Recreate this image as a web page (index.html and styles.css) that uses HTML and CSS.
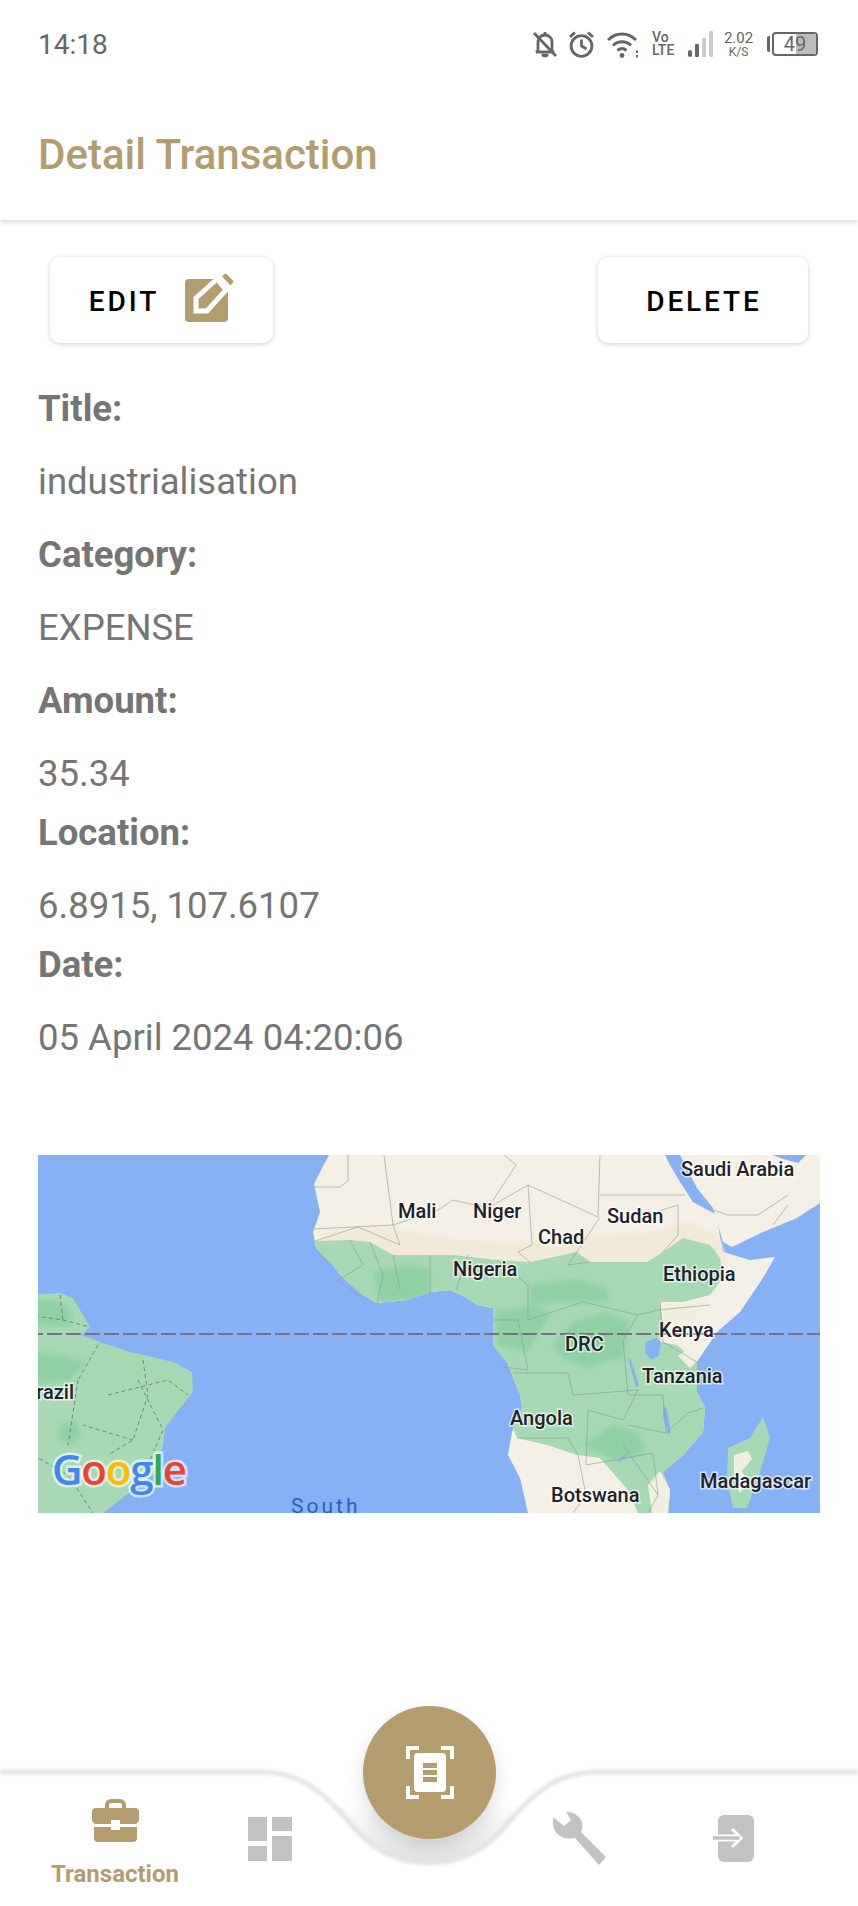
FILE: index.html
```html
<!DOCTYPE html>
<html lang="en">
<head>
  <meta charset="UTF-8" />
  <title>Detail Transaction</title>
  <meta name="viewport" content="width=device-width, initial-scale=1.0" />
  <link rel="stylesheet" href="styles.css">
</head>
<body>
<div class="screen">

  <div class="status-bar">
    <span class="status-time">14:18</span>
    <div class="status-icons">
      <svg class="ic-bell" viewBox="0 0 24 27" fill="none" stroke="#666" stroke-width="2.8">
        <path d="M5 20V11c0-4 3-7 7-7s7 3 7 7v9l2 1H3z"/>
        <path d="M9.5 23a2.6 2.6 0 0 0 5 0" fill="#666"/>
        <path d="M12 1v3"/>
        <path d="M1 2l22 23"/>
      </svg>
      <svg class="ic-clock" viewBox="0 0 27 27" fill="none" stroke="#666" stroke-width="2.8">
        <circle cx="13.5" cy="15" r="10.4"/>
        <path d="M13.5 8.5V15l5 3"/>
        <path d="M2 6l5-4.500M25 6l-5-4.500"/>
      </svg>
      <svg class="ic-wifi" viewBox="0 0 32 27" fill="none" stroke="#666" stroke-width="3">
        <path d="M1 9c8-8 20-8 28 0"/>
        <path d="M6 14.500c5-5 13-5 18 0"/>
        <path d="M10.500 19.500c3-2.600 6-2.600 9 0"/>
        <circle cx="15" cy="24.500" r="2.400" fill="#666" stroke="none"/>
        <path d="M30 19.500v2.500M30 24v2.500" stroke-width="2"/>
      </svg>
      <div class="ic-volte"><span>Vo</span><span>LTE</span></div>
      <svg class="ic-signal" viewBox="0 0 25 26">
        <rect x="0" y="19" width="4" height="7" rx="2" fill="#666"/>
        <rect x="7" y="13" width="4" height="13" rx="1" fill="#666"/>
        <rect x="14" y="7" width="4" height="19" rx="1" fill="#ccc"/>
        <rect x="21" y="0" width="4" height="26" rx="1" fill="#ccc"/>
      </svg>
      <div class="ic-speed"><span class="speed-num">2.02</span><span class="speed-unit">K/S</span></div>
      <div class="battery">
        <span class="battery-cap"></span>
        <div class="battery-body"><span class="battery-level"></span><span class="battery-num">49</span></div>
      </div>
    </div>
  </div>

  <header class="app-bar">
    <h1>Detail Transaction</h1>
  </header>

  <main class="content">
    <div class="actions">
      <button class="btn btn-edit"><span>EDIT</span>
        <svg viewBox="0 0 49 49" class="edit-icon">
          <rect x="0" y="6" width="43" height="43" rx="4" fill="#b39d6f"/>
          <path d="M30 4H46V19z" fill="#fff"/>
          <path d="M11 25 32 6 41 17 22 38H11z" fill="#b39d6f" stroke="#fff" stroke-width="5" stroke-linejoin="miter"/>
          <path d="M37 3.500l2-2a2 2 0 0 1 3 0l5.500 5.500a2 2 0 0 1 0 3l-2 2.500z" fill="#b39d6f"/>
        </svg>
      </button>
      <button class="btn btn-delete"><span>DELETE</span></button>
    </div>

    <div class="fields">
      <p class="label">Title:</p>
      <p class="value">industrialisation</p>
      <p class="label">Category:</p>
      <p class="value">EXPENSE</p>
      <p class="label">Amount:</p>
      <p class="value tight">35.34</p>
      <p class="label">Location:</p>
      <p class="value tight">6.8915, 107.6107</p>
      <p class="label">Date:</p>
      <p class="value">05 April 2024 04:20:06</p>
    </div>

    <svg class="map" viewBox="0 0 782 358">
      <defs>
        <filter id="soft" x="-10%" y="-10%" width="120%" height="120%"><feGaussianBlur stdDeviation="2"/></filter>
        <clipPath id="africa"><path d="M277 86L312 85 332 87 355 100 392 100 415 100 459 105 492 107 539 97 552 107 609 107 625 97 645 83 672 90 682 103 685 123 672 140 645 147 622 147 625 163 622 187 639 190 659 207 659 237 667 253 665 277 645 300 625 317 632 337 630 358H600L590 335 562 303 539 300 509 290 479 283 475 273 484 253 482 240 469 207 455 190 455 153 439 150 429 143 412 135 392 137 369 145 339 148 325 140 305 123 292 107 278 93z"/></clipPath>
      </defs>
      <rect width="782" height="358" fill="#86b1f5"/>

      <!-- africa -->
      <path class="land" d="M291 0L282 17 276 29 282 57 275 77 278 93 292 107 305 123 325 140 339 148 369 145 392 137 412 135 429 143 439 150 455 153 455 177 455 190 469 207 482 240 484 253 474 277 470 300 482 323 490 358H630L632 337 625 317 645 300 665 277 667 253 659 237 659 207 679 177 702 157 725 123 737 102 712 105 685 97 682 83 679 60 655 47 642 27 632 10 627 0z"/>
      <!-- arabia -->
      <path class="land" d="M642 0L659 33 675 53 685 87 694 92 725 77 759 63 782 48V0H768L760 8 745 4 735 0z"/>
      <path class="sahel" filter="url(#soft)" d="M280 78L340 70 400 82 470 88 540 80 610 78 650 66 680 80 690 110 640 120 500 115 300 100z"/>
      <path class="green" d="M277 86L312 85 332 87 355 100 392 100 415 100 459 105 492 107 539 97 552 107 609 107 625 97 645 83 672 90 682 103 685 123 672 140 645 147 622 147 625 163 622 187 639 190 659 207 659 237 667 253 665 277 645 300 625 317 632 337 630 358H600L590 335 562 303 539 300 509 290 479 283 475 273 484 253 482 240 469 207 455 190 455 153 439 150 429 143 412 135 392 137 369 145 339 148 325 140 305 123 292 107 278 93z"/>
      <g clip-path="url(#africa)">
        <path class="green-dark" filter="url(#soft)" d="M515 190L535 167 565 157 592 167 585 203 565 207 549 213 525 203z"/>
        <path class="green-dark" filter="url(#soft)" d="M457 157L499 150 512 160 489 197 459 190z"/>
        <path class="green-dark" filter="url(#soft)" d="M492 130L540 124 569 133 572 147 519 147 492 150z"/>
        <path class="green-dark" filter="url(#soft)" d="M335 117L369 110 392 113 392 143 369 145 342 147z"/>
        <path class="green-dark" filter="url(#soft)" d="M545 290l30-20 25 8 8 20-30 8z"/>
      </g>
      <path class="sand" d="M622 147L645 147 672 142 660 160 640 190 625 175z"/>
      <path class="sand" d="M610 330l12-14 10 18-2 24h-16z"/>
      <path class="sand" d="M648 195l-8 6 12 12 6-6z"/>
      <path class="water" d="M608 187l10-4 5 4-2 14-8 3-6-6zM625 250l4 4 4 24-3 1-5-18zM580 305l8-6 1 2-7 6zM560 345l6-6 1 2-5 6zM590 203l3 2 8 26-3 1z"/>

      <!-- madagascar -->
      <path class="green" d="M725 262L732 283 722 317 709 353 695 353 689 323 690 293 712 283z"/>
      <path class="sand" d="M696 300l14-4 4 8-10 12 6 12-8 10-6-14z"/>

      <!-- brazil -->
      <path class="green" d="M-10 140L22 138 35 143 52 172 44 180 62 187 92 197 135 207 154 217 155 237 139 257 127 273 125 290 115 320 92 337 65 358H-10z"/>
      <path class="green-dark" filter="url(#soft)" d="M-10 197L20 200 48 207 32 225 -10 230z"/>
      <path class="green-dark" filter="url(#soft)" d="M22 270l14-5 8 14-12 12-12-8z"/>
      <path class="green-dark" filter="url(#soft)" d="M-10 145L20 145 35 160 30 172 -10 170z"/>

      <!-- borders -->
      <g class="borders">
        <path d="M310 0V26L302 32H276M346 0L355 70 276 74M355 70L400 55 415 45 450 53 478 10 466 0M355 70L362 90 320 72 277 86M450 53L490 30 560 62 562 0M562 40 647 40M562 62L530 110 552 107M490 30L494 90 480 97 492 107"/>
        <path d="M312 85L325 110 300 125 322 142M332 87L345 120 339 148M355 100L362 135M392 100V143M430 100L418 135M459 105L490 130 490 165M490 165L545 147 600 160 585 185 590 240M600 160L620 155 672 150M622 147L625 187 659 207M455 165H480L490 215 465 212M475 218H530L535 240 600 235 585 265 550 255 548 310M592 240H625L628 278 590 270M628 278L650 258 665 253M480 283H530L540 300 548 340 535 358M548 310L615 298 620 340 610 358M585 290L620 340M608 60L640 50 640 80 625 97M675 55L690 60 720 60 750 40M735 70L750 50"/>
      </g>
      <g class="borders-dash">
        <path d="M-10 160L25 165 52 172M22 140L25 165M60 190L40 225M105 205L110 240 95 285 70 300M95 285L45 270M40 225L30 290M70 240L130 225 150 240M100 225L125 275 110 310M-5 300L30 320 55 358"/>
      </g>

      <path d="M-10 179H782" stroke="#7c6f84" stroke-width="2" stroke-dasharray="15 4" fill="none"/>

      <text class="place" x="643" y="21">Saudi Arabia</text>
      <text class="place" x="360" y="63">Mali</text>
      <text class="place" x="435" y="63">Niger</text>
      <text class="place" x="569" y="68">Sudan</text>
      <text class="place" x="500" y="89">Chad</text>
      <text class="place" x="415" y="121">Nigeria</text>
      <text class="place" x="625" y="126">Ethiopia</text>
      <text class="place" x="621" y="182">Kenya</text>
      <text class="place" x="527" y="196">DRC</text>
      <text class="place" x="604" y="228">Tanzania</text>
      <text class="place" x="472" y="270">Angola</text>
      <text class="place" x="513" y="347">Botswana</text>
      <text class="place" x="662" y="333">Madagascar</text>
      <text class="place" x="36" y="244" text-anchor="end">Brazil</text>
      <text class="ocean" x="253" y="358">South</text>
      <text class="google" x="14" y="330"><tspan fill="#4285f4">G</tspan><tspan fill="#ea4335">o</tspan><tspan fill="#fbbc04">o</tspan><tspan fill="#4285f4">g</tspan><tspan fill="#34a853">l</tspan><tspan fill="#ea4335">e</tspan></text>
    </svg>
  </main>

  <nav class="bottom-nav">
    <svg class="nav-curve" viewBox="0 0 858 135">
      <defs>
        <linearGradient id="notch" x1="0" y1="0" x2="0" y2="1">
          <stop offset="0.35" stop-color="#fff"/>
          <stop offset="1" stop-color="#e2e2e2"/>
        </linearGradient>
      </defs>
      <path fill="url(#notch)" d="M262 1C300 1 325 22 350 52 372 80 398 92 429 92 460 92 486 80 508 52 533 22 558 1 596 1z"/>
      <path class="curve-line" d="M0 1H262C300 1 325 22 350 52 372 80 398 92 429 92 460 92 486 80 508 52 533 22 558 1 596 1H858"/>
    </svg>

    <button class="fab">
      <svg viewBox="0 0 48 53" width="48" height="53">
        <path d="M2 13V2h11M35 2h11v11M2 40v11h11M35 51h11V40" fill="none" stroke="#fff" stroke-width="4"/>
        <rect x="8" y="7" width="32" height="39" rx="4" fill="#fff"/>
        <path d="M17 19.500h14M17 26.500h14M17 33.500h14" stroke="#b39d6f" stroke-width="5"/>
      </svg>
    </button>

    <a class="nav-item active">
      <svg viewBox="0 0 47 43" width="47" height="43">
        <path d="M15 10V6a4 4 0 0 1 4-4h9a4 4 0 0 1 4 4v4" fill="none" stroke="#b39d6f" stroke-width="4"/>
        <path d="M4 9h39a4 4 0 0 1 4 4v8a5 5 0 0 1-3 4H28v-4h-9v4H3a5 5 0 0 1-3-4v-8a4 4 0 0 1 4-4z" fill="#b39d6f"/>
        <path d="M2 28h17v3h9v-3h17v11a4 4 0 0 1-4 4H6a4 4 0 0 1-4-4z" fill="#b39d6f"/>
      </svg>
      <span>Transaction</span>
    </a>
    <a class="nav-item">
      <svg viewBox="0 0 44 44" width="44" height="44" fill="#c2c2c2">
        <rect x="0" y="0" width="19" height="24"/>
        <rect x="24" y="0" width="20" height="14"/>
        <rect x="0" y="29" width="19" height="15"/>
        <rect x="24" y="19" width="20" height="25"/>
      </svg>
    </a>
    <span class="nav-gap"></span>
    <a class="nav-item">
      <svg viewBox="0 0 53 53" width="53" height="53">
        <path d="M13 0a17 17 0 0 1 15 8c2 4 2 8 0 12l25 25-7 8-24-27c-4 1-9 1-13-1C3 22 0 18 0 11c0-2 0-4 1-5l10 8 7-6z" fill="#c2c2c2"/>
      </svg>
    </a>
    <a class="nav-item">
      <svg viewBox="0 0 41 47" width="41" height="47">
        <rect x="5" y="0" width="36" height="47" rx="6" fill="#c2c2c2"/>
        <path d="M19 14l9 9-9 9" fill="none" stroke="#fff" stroke-width="3"/>
        <path d="M1 23h24" stroke="#fff" stroke-width="7"/>
        <path d="M0 23h25" stroke="#c2c2c2" stroke-width="3.500" stroke-linecap="round"/>
      </svg>
    </a>
  </nav>
</div>
</body>
</html>
```

FILE: styles.css
```css
:root {
  --gold: #b39d6f;
  --grey-text: #757575;
  --font: Roboto, "Noto Sans", sans-serif;
}
html, body {
  margin: 0;
  height: 100%;
  background: #fff;
  font-family: var(--font);
}
.screen {
  height: 1906px;
  display: flex;
  flex-direction: column;
  overflow: hidden;
}

/* status bar */
.status-bar {
  height: 88px;
  padding: 0 39px 0 38px;
  display: flex;
  justify-content: space-between;
  align-items: center;
  box-sizing: border-box;
}
.status-time {
  font-size: 28px;
  color: #666;
}
.status-icons {
  display: flex;
  align-items: center;
  margin-right: 1px;
}
.ic-bell { width: 24px; height: 27px; margin-right: 11px; }
.ic-clock { width: 27px; height: 27px; margin-right: 12px; }
.ic-wifi { width: 32px; height: 27px; margin-right: 13px; }
.ic-volte {
  width: 24px;
  display: flex;
  flex-direction: column;
  font-size: 14px;
  line-height: 13px;
  font-weight: 500;
  color: #666;
  margin-right: 12px;
}
.ic-signal { width: 25px; height: 26px; margin-right: 10px; }
.ic-speed {
  width: 31px;
  display: flex;
  flex-direction: column;
  align-items: center;
  color: #666;
  margin-right: 13px;
}
.speed-num { font-size: 15px; line-height: 15px; }
.speed-unit { font-size: 12px; line-height: 12px; }
.battery {
  display: flex;
  align-items: center;
  gap: 2px;
}
.battery-cap {
  width: 3px;
  height: 16px;
  background: #666;
  border-radius: 2px 0 0 2px;
}
.battery-body {
  position: relative;
  width: 46px;
  height: 24px;
  box-sizing: border-box;
  border: 2px solid #666;
  border-radius: 4px;
  display: flex;
  align-items: center;
  justify-content: center;
}
.battery-level {
  position: absolute;
  top: 0;
  bottom: 0;
  right: 0;
  width: 20px;
  background: #bdbdbd;
}
.battery-num {
  position: relative;
  font-size: 20px;
  color: #666;
}

/* header */
.app-bar {
  height: 132px;
  padding: 0 38px;
  display: flex;
  align-items: center;
  box-sizing: border-box;
  box-shadow: 0 2px 5px rgba(0, 0, 0, 0.16);
  clip-path: inset(0 0 -12px 0);
  position: relative;
}
.app-bar h1 {
  margin: 0;
  font-size: 42px;
  font-weight: 500;
  color: var(--gold);
}

/* content */
.content {
  padding: 37px 38px 0;
}
.actions {
  display: flex;
  justify-content: space-between;
  padding: 0 12px;
}
.btn {
  height: 86px;
  border: none;
  border-radius: 10px;
  background: #fff;
  box-shadow: 0 1px 5px rgba(0, 0, 0, 0.2);
  font-family: var(--font);
  font-size: 28px;
  font-weight: 500;
  letter-spacing: 2.9px;
  color: #000;
  display: flex;
  align-items: center;
  justify-content: center;
  padding: 0;
}
.btn span { margin-top: 3px; }
.btn-edit { width: 223px; gap: 26px; }
.btn-delete { width: 210px; }
.btn-delete span { margin-left: 2px; }
.edit-icon { width: 49px; height: 49px; margin-top: -5px; }

.fields {
  padding-top: 46px;
}
.fields p {
  margin: 0 0 34px;
  font-size: 36.5px;
  line-height: 39px;
  color: var(--grey-text);
}
.fields .label { font-weight: 700; }
.fields .tight { margin-bottom: 20px; }
.fields p:last-child { margin-bottom: 0; }

.map {
  display: block;
  width: 782px;
  height: 358px;
  margin-top: 98px;
}
.land { fill: #f5f0e6; }
.sahel { fill: #f2ead9; }
.sand { fill: #f1efdf; }
.green { fill: #a6d9b4; }
.green-dark { fill: #90d1a4; }
.water { fill: #86b1f5; }
.borders path { fill: none; stroke: #8b9a8e; stroke-width: 0.8; opacity: 0.75; }
.borders-dash path {
  fill: none;
  stroke: #5c7566;
  stroke-width: 1;
  stroke-dasharray: 4 3;
  opacity: 0.8;
}
.place {
  font-family: var(--font);
  font-size: 20px;
  font-weight: 500;
  fill: #1f2328;
  stroke: rgba(255, 255, 255, 0.65);
  stroke-width: 3px;
  paint-order: stroke;
}
.ocean {
  font-family: var(--font);
  font-size: 21px;
  letter-spacing: 3px;
  fill: #2d5fb3;
}
.google {
  font-family: "Open Sans", var(--font);
  font-size: 42px;
  font-weight: 600;
  letter-spacing: -1.2px;
  stroke: rgba(255, 255, 255, 0.65);
  stroke-width: 5px;
  paint-order: stroke;
}

/* bottom nav */
.bottom-nav {
  margin-top: auto;
  height: 135px;
  padding-left: 38px;
  display: grid;
  grid-template-columns: 154px 156px 154px 154px 154px;
  position: relative;
}
.nav-curve {
  position: absolute;
  left: 0;
  top: 0;
  width: 858px;
  height: 135px;
  overflow: visible;
}
.curve-line { fill: none; stroke: #e4e4e4; stroke-width: 5; filter: blur(1.5px); }
.fab {
  position: absolute;
  left: 363px;
  top: -65px;
  width: 133px;
  height: 133px;
  border: none;
  border-radius: 50%;
  background: var(--gold);
  box-shadow: 0 8px 18px rgba(0, 0, 0, 0.14);
  display: flex;
  align-items: center;
  justify-content: center;
  padding: 0;
}
.nav-item {
  position: relative;
  display: flex;
  flex-direction: column;
  align-items: center;
  justify-content: center;
  gap: 18px;
  font-size: 24px;
  line-height: 28px;
  font-weight: 700;
  color: var(--gold);
}
.nav-item.active { padding-top: 9px; }
```
